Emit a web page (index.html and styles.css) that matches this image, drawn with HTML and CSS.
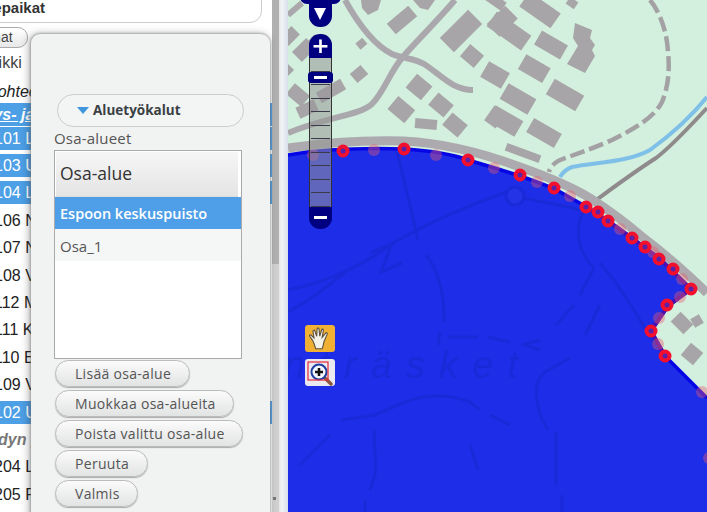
FILE: index.html
```html
<!DOCTYPE html>
<html lang="en">
<head>
    <meta charset="UTF-8">
    <title>Aluetyökalut</title>
    <link rel="stylesheet" href="styles.css">
</head>
<body>
    <div class="page">
        <!-- Left column with the site list -->
        <aside class="sidebar">
            <div class="list-col">
                <div class="title-box">Kohdepaikat</div>
                <div class="pill-btn">Valinnat</div>
                <div class="row plain">Kaikki</div>
                <div class="row group">Kohteet</div>
                <div class="row head">Retkeilys- ja</div>
                <div class="row sel">101 L</div>
                <div class="row sel">103 U</div>
                <div class="row sel">104 L</div>
                <div class="row">106 N</div>
                <div class="row">107 N</div>
                <div class="row">108 V</div>
                <div class="row">112 M</div>
                <div class="row">111 K</div>
                <div class="row">110 E</div>
                <div class="row">109 V</div>
                <div class="row sel">102 U</div>
                <div class="row group2">dyn paikat</div>
                <div class="row">204 L</div>
                <div class="row">205 P</div>
            </div>
            <div class="scrollbar">
                <div class="thumb"></div>
                <div class="corner"></div>
            </div>
            <div class="gutter"></div>
        </aside>

        <!-- Map -->
        <main class="map">
            <svg class="map-svg" viewBox="288 0 419 512" width="419" height="512">
                <rect x="288" y="0" width="419" height="512" fill="#d3efde"/>

                <g class="soft">
                    <g class="roads">
                        <path d="M345 0C355 18 372 44 392 54C404 59 414 58 424 64C440 74 452 90 473 90"/>
                        <path d="M455 0C438 20 412 46 402 58C390 72 384 92 372 104C358 116 330 116 288 133"/>
                        <path d="M288 15L302 3"/>
                    </g>
                    <path class="dashed" d="M650 0C660 12 667 32 668 52C670 70 668 88 662 102C654 118 632 130 612 140C592 149 570 156 558 161C552 165 550 168 549 172"/>
                    <path class="stream" d="M707 97C690 118 672 134 650 150C628 162 600 162 572 167C566 169 563 172 560 177"/>
                    <path class="track" d="M707 108C690 126 672 146 656 158C634 172 610 190 592 203"/>

                    <g class="buildings">
                        <polygon points="361,0 381,0 378,10 368,15 362,8"/>
                        <rect x="388" y="13" width="28" height="14" transform="rotate(-40 402 20)"/>
                        <polygon points="413,0 435,0 428,10 420,8"/>
                        <rect x="441" y="21" width="40" height="20" transform="rotate(-45 461 31)"/>
                        <rect x="463" y="48" width="18" height="16" transform="rotate(40 472 56)"/>
                        <rect x="490" y="12" width="26" height="18" transform="rotate(-45 503 22)"/>
                        <rect x="488" y="22" width="42" height="18" transform="rotate(35 509 31)"/>
                        <rect x="521" y="1" width="38" height="18" transform="rotate(35 540 10)"/>
                        <rect x="536" y="37" width="30" height="16" transform="rotate(30 551 45)"/>
                        <rect x="482" y="-5" width="24" height="10" transform="rotate(35 494 0)"/>
                        <rect x="567" y="-1" width="10" height="8" transform="rotate(35 572 3)"/>
                        <polygon points="575,23 592,30 590,38 595,45 592,50 595,56 585,73 567,64 578,46 573,38"/>
                        <rect x="520" y="60" width="28" height="17" transform="rotate(30 534 69)"/>
                        <rect x="483" y="66" width="24" height="18" transform="rotate(30 495 75)"/>
                        <rect x="502" y="90" width="32" height="18" transform="rotate(30 518 99)"/>
                        <rect x="548" y="86" width="34" height="18" transform="rotate(30 565 95)"/>
                        <rect x="489" y="112" width="32" height="18" transform="rotate(30 505 121)"/>
                        <rect x="528" y="125" width="32" height="16" transform="rotate(30 544 133)"/>
                        <rect x="505" y="149" width="36" height="8" transform="rotate(20 523 153)"/>
                        <rect x="390" y="101" width="22" height="17" transform="rotate(40 401 110)"/>
                        <rect x="409" y="78" width="20" height="18" transform="rotate(40 419 87)"/>
                        <rect x="431" y="97" width="20" height="16" transform="rotate(40 441 105)"/>
                        <rect x="415" y="119" width="22" height="10" transform="rotate(5 426 124)"/>
                        <rect x="445" y="117" width="20" height="16" transform="rotate(40 455 125)"/>
                        <rect x="488" y="108" width="14" height="18" transform="rotate(35 495 117)"/>
                        <rect x="352" y="68" width="14" height="12" transform="rotate(-40 359 74)"/>
                        <rect x="357" y="40" width="9" height="8" transform="rotate(-40 361 44)"/>
                        <rect x="294" y="43" width="20" height="14" transform="rotate(-45 304 50)"/>
                        <rect x="306" y="38" width="14" height="10" transform="rotate(-45 313 43)"/>
                        <rect x="282" y="30" width="16" height="12" transform="rotate(-45 290 36)"/>
                        <rect x="282" y="65" width="10" height="10" transform="rotate(-45 287 70)"/>
                        <rect x="288" y="88" width="20" height="14" transform="rotate(40 298 95)"/>
                        <rect x="297" y="103" width="20" height="12" transform="rotate(-25 307 109)"/>
                        <rect x="317" y="85" width="28" height="12" transform="rotate(-30 331 91)"/>
                        <rect x="673" y="316" width="18" height="14" transform="rotate(45 682 323)"/>
                        <rect x="692" y="316" width="10" height="10" transform="rotate(-30 697 321)"/>
                        <rect x="684" y="346" width="16" height="16" transform="rotate(40 692 354)"/>
                    </g>

                    <path class="shore" d="M288 148C330 142 370 140 404 141C445 143 485 154 520 167C548 177 570 186 590 198C610 211 625 222 640 235C665 254 688 274 707 293"/>

                    <path class="lake" d="M288 155C330 148 370 148 404 149C435 151 455 155 468 160C485 165 505 171 520 176C535 181 545 185 555 189L585 206L608 221L632 238L660 259L691 289L668 306L651 331L665 356L707 398V512H288Z"/>
                    <path class="lake-edge" d="M288 155C330 148 370 148 404 149C435 151 455 155 468 160C485 165 505 171 520 176C535 181 545 185 555 189L585 206L608 221L632 238L660 259L691 289L668 306L651 331L665 356L707 398"/>
                    <path class="lake-mark" d="M585 206L608 221L632 238L660 259L691 289L668 306L651 331L665 356"/>

                    <g class="lake-lines">
                        <circle cx="515" cy="196" r="9"/>
                        <path d="M397 152L410 205L418 240M426 255C438 270 445 295 444 322M440 332L438 345"/>
                        <path d="M288 290C330 282 368 262 395 242C430 222 470 205 506 192"/>
                        <path d="M288 312C310 300 330 285 345 272"/>
                        <path d="M370 253L392 243L381 272L402 263"/>
                        <path d="M524 198C550 204 570 206 586 212"/>
                        <path d="M583 212C574 232 578 252 594 268L580 295M574 305L556 325M540 340L522 345"/>
                        <path d="M600 263C620 285 640 320 655 345"/>
                        <path d="M600 305L585 335M570 358L545 372C528 385 540 420 548 430M556 432V485M562 495V512"/>
                        <path d="M448 337H478M488 337L510 342M525 345L540 350"/>
                        <path d="M341 420L375 415L405 402C425 394 450 394 470 402L480 410M490 415L510 425M470 445L478 470"/>
                        <path d="M300 465L330 435M375 430C372 445 378 460 375 475L370 490M365 500V512"/>
                    </g>
                    <text class="lake-name" x="284" y="378" textLength="234">nträsket</text>

                    <g class="ghost">
                        <circle cx="313" cy="155" r="6"/>
                        <circle cx="374" cy="150" r="6"/>
                        <circle cx="436" cy="155" r="6"/>
                        <circle cx="494" cy="168" r="6"/>
                        <circle cx="537" cy="182" r="6"/>
                        <circle cx="570" cy="196" r="6"/>
                        <circle cx="620" cy="229" r="6"/>
                        <circle cx="653" cy="252" r="6"/>
                        <circle cx="682" cy="279" r="6"/>
                        <circle cx="680" cy="297" r="6"/>
                        <circle cx="659" cy="318" r="6"/>
                        <circle cx="658" cy="344" r="6"/>
                        <circle cx="702" cy="392" r="6"/>
                        <circle cx="709" cy="458" r="6"/>
                    </g>
                </g>
                <g class="vertex">
                    <circle cx="343" cy="151" r="4.5"/>
                    <circle cx="404" cy="149" r="4.5"/>
                    <circle cx="468" cy="160" r="4.5"/>
                    <circle cx="520" cy="175" r="4.5"/>
                    <circle cx="554" cy="188" r="4.5"/>
                    <circle cx="586" cy="207" r="4.5"/>
                    <circle cx="598" cy="212" r="4.5"/>
                    <circle cx="608" cy="221" r="4.5"/>
                    <circle cx="632" cy="238" r="4.5"/>
                    <circle cx="645" cy="247" r="4.5"/>
                    <circle cx="659" cy="259" r="4.5"/>
                    <circle cx="673" cy="269" r="4.5"/>
                    <circle cx="691" cy="289" r="4.5"/>
                    <circle cx="667" cy="305" r="4.5"/>
                    <circle cx="651" cy="331" r="4.5"/>
                    <circle cx="665" cy="356" r="4.5"/>
                </g>
            </svg>

            <!-- Map controls -->
            <div class="pan">
                <div class="pan-top"></div>
                <div class="pan-down"></div>
            </div>
            <div class="zoombar">
                <div class="zoom-end zoom-plus">+</div>
                <div class="zoom-steps">
                    <div class="step"></div><div class="step"></div><div class="step"></div>
                    <div class="step"></div><div class="step"></div><div class="step"></div>
                    <div class="step"></div><div class="step"></div><div class="step"></div>
                    <div class="step"></div><div class="step"></div>
                </div>
                <div class="zoom-handle"></div>
                <div class="zoom-end zoom-minus"></div>
            </div>
            <div class="tools">
                <div class="tool tool-on">
                    <svg width="26" height="26" viewBox="0 0 24 24">
                        <path d="M5 13L2.5 9.5C2 8.5 3.2 7.8 4 8.6L6.5 11L5.5 5C5.3 3.8 6.8 3.4 7.2 4.5L9 9.5L9.3 2.8C9.4 1.6 11 1.6 11.1 2.8L11.8 9.3L13.5 3.5C13.9 2.4 15.3 2.8 15.1 4L14 10.5L17.3 6.5C18 5.7 19.2 6.5 18.7 7.5L15.8 14C15 17 15 19 14 21H8C7 17.5 6.5 15.5 5 13Z" fill="#f4f2e8" stroke="#5a5040" stroke-width="1"/>
                    </svg>
                </div>
                <div class="tool">
                    <svg width="30" height="27" viewBox="0 0 30 27">
                        <path d="M19 18L26 25" stroke="#8a5a40" stroke-width="3.5" stroke-linecap="round"/>
                        <circle cx="14" cy="13" r="7.5" fill="#f4f6ff" stroke="#1f3f9f" stroke-width="2"/>
                        <path d="M14 9V17M10 13H18" stroke="#111" stroke-width="2.5"/>
                        <rect x="3" y="3" width="20" height="18" fill="none" stroke="#e8283a" stroke-width="1.2"/>
                    </svg>
                </div>
            </div>
        </main>

        <!-- Area tools dialog -->
        <section class="dialog">
            <div class="accordion">
                <span class="tri"></span>
                <span class="accordion-text">Aluetyökalut</span>
            </div>
            <div class="field-label">Osa-alueet</div>
            <div class="grid-box">
                <div class="grid-head">Osa-alue</div>
                <div class="grid-row grid-sel">Espoon keskuspuisto</div>
                <div class="grid-row grid-alt">Osa_1</div>
            </div>
            <div class="actions">
                <button class="btn">Lisää osa-alue</button>
                <button class="btn">Muokkaa osa-alueita</button>
                <button class="btn">Poista valittu osa-alue</button>
                <button class="btn">Peruuta</button>
                <button class="btn">Valmis</button>
            </div>
        </section>
    </div>
</body>
</html>
```

FILE: styles.css
```css
html, body {
    margin: 0;
    padding: 0;
    height: 100%;
    overflow: hidden;
    background: #fff;
}

.page {
    position: relative;
    display: flex;
    width: 707px;
    height: 512px;
    overflow: hidden;
    font-family: "Liberation Sans", Arial, sans-serif;
}

/* sidebar */
.sidebar {
    display: flex;
    flex: 0 0 288px;
    height: 512px;
}

.list-col {
    flex: 0 0 272px;
    overflow: hidden;
    background: #fff;
}

.title-box {
    box-sizing: border-box;
    width: 302px;
    height: 31px;
    margin: -8px 0 0 -40px;
    padding-top: 6px;
    border: 1px solid #ccc;
    border-radius: 0 0 12px 12px;
    font-size: 15px;
    font-weight: bold;
    color: #333;
    white-space: nowrap;
    text-indent: -6px;
}

.pill-btn {
    box-sizing: border-box;
    width: 60px;
    height: 21px;
    margin: 4px 0 0 -32px;
    border: 1px solid #aaa;
    border-radius: 10px;
    background: linear-gradient(#fff, #e8e8e8);
    font-size: 14px;
    line-height: 19px;
    color: #444;
    text-indent: -6px;
    overflow: hidden;
    white-space: nowrap;
}

.row {
    height: 23px;
    margin-bottom: 4.4px;
    text-indent: -6px;
    font-size: 16px;
    line-height: 23px;
    color: #222;
    white-space: nowrap;
    overflow: hidden;
}

.row.plain {
    margin-top: 3px;
    margin-bottom: 6px;
    text-indent: -21px;
    color: #444;
}

.row.group {
    margin-bottom: 0;
    font-style: italic;
    text-indent: -13px;
}

.row.head {
    margin-bottom: 0.6px;
    background: #4d9fe6;
    color: #fff;
    font-weight: bold;
    font-style: italic;
    text-indent: -59px;
    text-decoration: underline;
}

.row.sel {
    background: #4d9fe6;
    color: #fff;
}

.row.group2 {
    color: #777;
    font-weight: bold;
    font-style: italic;
    text-indent: -2px;
}

.scrollbar {
    position: relative;
    flex: 0 0 7px;
    background: #d0d0d0;
}

.thumb {
    height: 264px;
    background: #b0b0b0;
}

.corner {
    position: absolute;
    left: 1px;
    bottom: 12px;
    width: 3px;
    height: 3px;
    background: #777;
}

.gutter {
    flex: 1;
    background: linear-gradient(90deg, #e4e4e4, #f2f4f6 30%, #d8dfec);
}

/* dialog */
.dialog {
    position: absolute;
    left: 31px;
    top: 34px;
    box-sizing: border-box;
    width: 239px;
    height: 490px;
    padding: 60px 0 0 23px;
    background: #f1f2f2;
    border-radius: 9px;
    box-shadow: 0 0 3px #777, -2px 0 8px rgba(0, 0, 0, 0.3);
    font-family: "Open Sans", sans-serif;
    color: #444;
}

.accordion {
    box-sizing: border-box;
    display: flex;
    align-items: center;
    gap: 4px;
    width: 187px;
    height: 33px;
    margin-left: 3px;
    padding-left: 19px;
    border: 1px solid #ccc;
    border-radius: 17px;
    background: #f3f4f4;
    font-size: 13.5px;
    font-weight: bold;
    color: #3a3f44;
}

.accordion-text {
    padding-bottom: 2px;
}

.tri {
    width: 0;
    height: 0;
    border-left: 6px solid transparent;
    border-right: 6px solid transparent;
    border-top: 7px solid #3f96dc;
}

.field-label {
    margin: 1px 0 2px;
    font-size: 15px;
    line-height: 20px;
    letter-spacing: 0.2px;
    color: #555;
}

.grid-box {
    box-sizing: border-box;
    width: 188px;
    height: 209px;
    padding: 1px 3px 0 0;
    border: 1px solid #aaa;
    background: #fff;
}

.grid-head {
    box-sizing: border-box;
    height: 45px;
    padding-left: 4px;
    border-left: 1px solid #fff;
    border-bottom: 1px solid #ddd;
    background: linear-gradient(#f6f6f6, #e4e4e4);
    font-size: 17.5px;
    line-height: 43px;
    color: #333;
}

.grid-row {
    height: 32px;
    margin-right: -3px;
    padding-left: 5px;
    font-size: 15px;
    line-height: 34px;
}

.grid-sel {
    background: #4f9fe8;
    color: #fff;
    font-size: 14.5px;
    font-weight: 600;
}

.grid-alt {
    background: #f5f7f6;
    color: #555;
}

.actions {
    display: flex;
    flex-direction: column;
    align-items: flex-start;
    gap: 3px;
    margin: 1px 0 0 1px;
}

.btn {
    box-sizing: border-box;
    height: 27px;
    padding: 0 17.5px 0 19px;
    border: 1px solid #bbb;
    border-radius: 14px;
    background: linear-gradient(#fbfbfb, #e2e3e3);
    box-shadow: 0 1px 1px #aaa;
    font-family: "Open Sans", sans-serif;
    font-size: 14px;
    letter-spacing: 0.3px;
    color: #555;
    cursor: pointer;
}

/* map */
.map {
    position: relative;
    flex: 1;
    height: 512px;
    overflow: hidden;
}

.map-svg {
    display: block;
}

.soft {
    filter: blur(0.5px);
}

.roads path {
    fill: none;
    stroke: #aaa8ac;
    stroke-width: 6;
}

.dashed {
    fill: none;
    stroke: #a3a1a3;
    stroke-width: 4.5;
    stroke-dasharray: 15 5;
}

.stream {
    fill: none;
    stroke: #7fc0e8;
    stroke-width: 4;
}

.track {
    fill: none;
    stroke: #8f8a8c;
    stroke-width: 4;
}

.buildings {
    fill: #a8a5a8;
}

.shore {
    fill: none;
    stroke: #acaaae;
    stroke-width: 9;
}

.lake {
    fill: #1e2de8;
}

.lake-edge {
    fill: none;
    stroke: #0505e6;
    stroke-width: 3.5;
}

.lake-mark {
    fill: none;
    stroke: #4a10b0;
    stroke-width: 4;
}

.lake-lines {
    fill: none;
    stroke: #1b2ad8;
    stroke-width: 3;
}

.lake-lines circle {
    fill: #2433e6;
}

.lake-name {
    font-family: "Liberation Sans", sans-serif;
    font-style: italic;
    font-size: 38px;
    fill: #1b2ad8;
}

.ghost circle {
    fill: rgba(235, 90, 110, 0.4);
}

.vertex circle {
    fill: #5a22a8;
    stroke: #f2102e;
    stroke-width: 4;
}

.pan {
    position: absolute;
    left: 12px;
    top: -3px;
    display: flex;
    flex-direction: column;
    align-items: center;
    width: 41px;
}

.pan-top {
    width: 41px;
    height: 7px;
    background: #000080;
    border-radius: 0 0 8px 8px;
}

.pan-down {
    position: relative;
    width: 23px;
    height: 23px;
    background: #000080;
    border-radius: 0 0 11px 11px;
}

.pan-down::after {
    content: "";
    position: absolute;
    left: 5px;
    top: 4px;
    border-left: 6.5px solid transparent;
    border-right: 6.5px solid transparent;
    border-top: 12px solid #fff;
}

.zoombar {
    position: absolute;
    left: 21px;
    top: 34px;
    width: 23px;
}

.zoom-end {
    position: relative;
    background: #000080;
}

.zoom-plus {
    height: 24px;
    border-radius: 11px 11px 0 0;
    color: #fff;
    font-family: "DejaVu Sans", sans-serif;
    font-size: 22px;
    font-weight: bold;
    line-height: 24px;
    text-align: center;
}

.zoom-minus {
    height: 22px;
    border-radius: 0 0 11px 11px;
}

.zoom-minus::after,
.zoom-handle::after {
    content: "";
    position: absolute;
    left: 5px;
    width: 13px;
    height: 2.5px;
    background: #fff;
}

.zoom-minus::after {
    top: 9px;
}

.zoom-steps {
    box-sizing: border-box;
    height: 149px;
    padding: 0 1px;
    background: rgba(150, 150, 150, 0.55);
    border-left: 1px solid #333;
    border-right: 1px solid #333;
}

.step {
    box-sizing: border-box;
    height: 13.55px;
    border-bottom: 1px solid #3a3a48;
}

.zoom-handle {
    position: absolute;
    left: -1px;
    top: 38px;
    width: 25px;
    height: 11px;
    background: #000080;
    border-radius: 3px;
}

.zoom-handle::after {
    left: 6px;
    top: 4px;
}

.tools {
    position: absolute;
    left: 17px;
    top: 325px;
    display: flex;
    flex-direction: column;
    gap: 7px;
}

.tool {
    display: flex;
    align-items: center;
    justify-content: center;
    width: 30px;
    height: 27px;
    border-radius: 3px;
    background: #e9e9ef;
}

.tool-on {
    background: #efb033;
}
```
